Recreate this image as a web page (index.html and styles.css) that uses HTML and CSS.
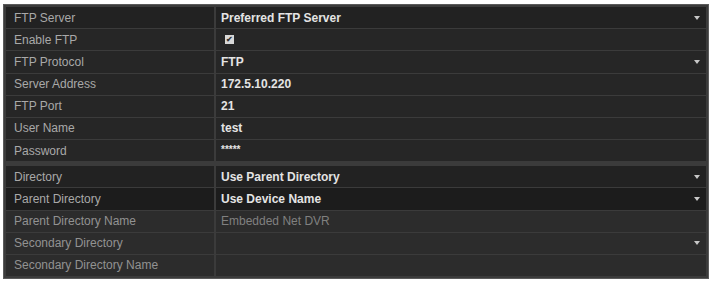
FILE: index.html
```html
<!DOCTYPE html>
<html lang="en">
<head>
    <meta charset="UTF-8">
    <title>FTP Settings</title>
    <link rel="stylesheet" href="styles.css">
</head>
<body>
    <div class="panel">
        <div class="row dark">
            <div class="label">FTP Server</div>
            <div class="value">Preferred FTP Server<span class="arrow"></span></div>
        </div>
        <div class="row">
            <div class="label">Enable FTP</div>
            <div class="value"><span class="check">&#10004;</span></div>
        </div>
        <div class="row">
            <div class="label">FTP Protocol</div>
            <div class="value">FTP<span class="arrow"></span></div>
        </div>
        <div class="row">
            <div class="label">Server Address</div>
            <div class="value">172.5.10.220</div>
        </div>
        <div class="row">
            <div class="label">FTP Port</div>
            <div class="value">21</div>
        </div>
        <div class="row">
            <div class="label">User Name</div>
            <div class="value">test</div>
        </div>
        <div class="row group-end">
            <div class="label">Password</div>
            <div class="value password">*****</div>
        </div>
        <div class="row dark">
            <div class="label">Directory</div>
            <div class="value">Use Parent Directory<span class="arrow"></span></div>
        </div>
        <div class="row darker">
            <div class="label">Parent Directory</div>
            <div class="value">Use Device Name<span class="arrow"></span></div>
        </div>
        <div class="row disabled">
            <div class="label">Parent Directory Name</div>
            <div class="value">Embedded Net DVR</div>
        </div>
        <div class="row disabled">
            <div class="label">Secondary Directory</div>
            <div class="value"><span class="arrow"></span></div>
        </div>
        <div class="row disabled">
            <div class="label">Secondary Directory Name</div>
            <div class="value"></div>
        </div>
    </div>
</body>
</html>
```

FILE: styles.css
```css
body {
    margin: 0;
    background-color: #fff;
    font-family: "Liberation Sans", Arial, sans-serif;
}

.panel {
    margin: 4px 0 0 3px;
    width: 706px;
    height: 275px;
    box-sizing: border-box;
    background-color: #3b3b3b;
    border: 1px solid #5a5a5a;
    padding: 2px;
    display: flex;
    flex-direction: column;
    gap: 1px;
}

.row {
    flex: 1;
    display: grid;
    grid-template-columns: 208px 1fr;
    gap: 2px;
}

.row.group-end {
    margin-bottom: 4px;
}

.label,
.value {
    display: flex;
    align-items: center;
    background-color: #262626;
}

.label {
    padding-left: 8px;
    font-size: 12px;
    color: #a9a9a9;
}

.value {
    position: relative;
    padding-left: 5px;
    font-size: 12px;
    font-weight: bold;
    color: #e4e4e4;
}

.value.password {
    font-size: 10px;
    padding-bottom: 3px;
}

.dark .label,
.dark .value {
    background-color: #222;
}

.darker .label,
.darker .value {
    background-color: #1c1c1c;
}

.disabled .label,
.disabled .value {
    background-color: #2c2c2c;
}

.disabled .label {
    color: #929292;
}

.disabled .value {
    color: #808080;
    font-weight: normal;
}

.arrow {
    position: absolute;
    right: 6px;
    top: 50%;
    margin-top: -2px;
    width: 0;
    height: 0;
    border-left: 3px solid transparent;
    border-right: 3px solid transparent;
    border-top: 4px solid #c8c8c8;
}

.check {
    margin-left: 4px;
    width: 9px;
    height: 9px;
    background-color: #d8d8d8;
    color: #333;
    font-size: 8px;
    line-height: 9px;
    text-align: center;
}
```
